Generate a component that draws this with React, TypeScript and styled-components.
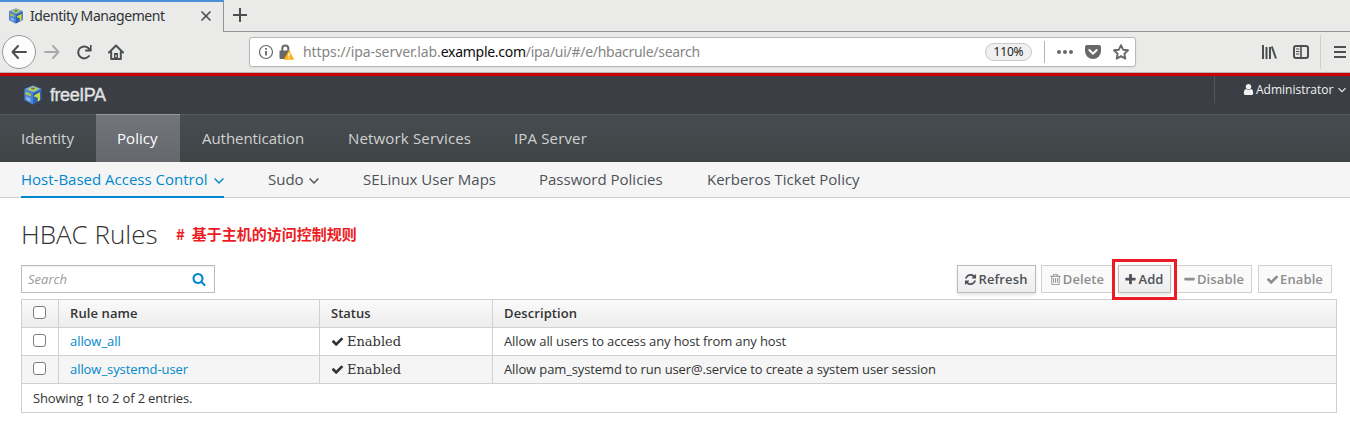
import React from "react";
import styled, { createGlobalStyle } from "styled-components";

const Global = createGlobalStyle`
  * { box-sizing: border-box; }
  body { margin: 0; background: #fff; color: #333; font: 13px/20px "Open Sans", sans-serif; }
  svg { display: block; flex: none; }
`;

const Page = styled.div`
  width: 1350px;
  height: 426px;
  overflow: hidden;
  background: #fff;
`;

const TabStrip = styled.div`
  display: flex;
  height: 32px;
  background: #eaeae9;
`;

const Tab = styled.div`
  display: flex;
  align-items: center;
  width: 224px;
  border-top: 2px solid #4a90d9;
  border-right: 1px solid #929595;
  padding: 0 11px 2px 8px;
  font: 14px/20px "Noto Sans", sans-serif;
  color: #2e3436;
`;

const TabTitle = styled.span`
  flex: 1;
  margin-left: 6px;
  white-space: nowrap;
  letter-spacing: -0.42px;
`;

const StripRest = styled.div`
  flex: 1;
  padding: 8px 0 0 9px;
  border-bottom: 1px solid #929595;
`;

const BrowserBar = styled.div`
  display: flex;
  align-items: center;
  height: 41px;
  padding: 0 3px 0 2px;
  background: #eaeae9;
  border-bottom: 1px solid #b2b5b5;
`;

const BackButton = styled.div`
  display: flex;
  align-items: center;
  justify-content: center;
  width: 34px;
  height: 34px;
  border: 1px solid #979998;
  border-radius: 50%;
  background: #fcfcfc;
`;

const BarIcon = styled.div<{ $left: number }>`
  margin-left: ${(p) => p.$left}px;
`;

const UrlBar = styled.div`
  display: flex;
  align-items: center;
  width: 887px;
  height: 30px;
  margin-left: 125px;
  padding: 0 6px 0 8px;
  border: 1px solid #b7b7b5;
  border-radius: 3px;
  background: #fff;
  box-shadow: 0 1px 2px rgba(0, 0, 0, 0.06);
`;

const Url = styled.span`
  flex: 1;
  margin-left: 8px;
  font: 14px/20px "Noto Sans", sans-serif;
  letter-spacing: -0.07px;
  color: #858585;
  white-space: nowrap;
`;

const UrlHost = styled.span`
  letter-spacing: -0.28px;
  color: #0c0c0d;
`;

const UrlPath = styled.span`
  letter-spacing: -0.28px;
`;

const Zoom = styled.span`
  width: 47px;
  height: 18px;
  border: 1px solid #c9c9c9;
  border-radius: 9px;
  background: #f0f0f0;
  font: 12px/16px "Noto Sans", sans-serif;
  letter-spacing: -0.2px;
  text-align: center;
  color: #222;
`;

const Divider = styled.div<{ $h: number; $left: number; $c: string }>`
  width: 1px;
  height: ${(p) => p.$h}px;
  margin-left: ${(p) => p.$left}px;
  background: ${(p) => p.$c};
`;

const Masthead = styled.header`
  display: flex;
  justify-content: space-between;
  height: 41px;
  padding-left: 23px;
  border-top: 3px solid #c00;
  background: #3b3e45;
`;

const Brand = styled.div`
  display: flex;
  align-items: center;
  gap: 7px;
  color: #e2e3e4;
  font: 18px/20px "Liberation Sans", sans-serif;
  letter-spacing: -0.45px;
  -webkit-text-stroke: 0.35px #e2e3e4;
`;

const UserMenu = styled.div`
  display: flex;
  align-items: center;
  width: 136px;
  height: 27px;
  padding-left: 27px;
  border-left: 1px solid #53565b;
  color: #f1f1f1;
  font-size: 12px;
`;

const UserName = styled.span`
  width: 80px;
  margin: 0 2px 0 1px;
`;

const MainNav = styled.nav`
  display: flex;
  height: 48px;
  border-top: 1px solid #55595c;
  background: linear-gradient(#474c50, #3f4447);
`;

const NavItem = styled.div<{ $w: number; $pad: number; $active?: boolean; $spacing?: number }>`
  width: ${(p) => p.$w}px;
  padding-left: ${(p) => p.$pad}px;
  margin-top: -1px;
  border-top: 1px solid ${(p) => (p.$active ? "#95979b" : "transparent")};
  background: ${(p) => (p.$active ? "linear-gradient(#72757b, #64676c)" : "none")};
  color: ${(p) => (p.$active ? "#fff" : "#d1d1d1")};
  font-size: 15px;
  line-height: 47px;
  letter-spacing: ${(p) => p.$spacing ?? 0}px;
  white-space: nowrap;
`;

const SubNav = styled.nav`
  display: flex;
  height: 36px;
  padding-left: 21px;
  border-bottom: 1px solid #cecdcd;
  background: #f5f5f5;
`;

const SubItem = styled.div<{ $w: number; $gap: number; $active?: boolean }>`
  display: flex;
  align-items: center;
  justify-content: space-between;
  width: ${(p) => p.$w}px;
  height: 36px;
  margin-right: ${(p) => p.$gap}px;
  border-bottom: 2px solid ${(p) => (p.$active ? "#0088ce" : "transparent")};
  color: ${(p) => (p.$active ? "#0088ce" : "#4d5258")};
  font-size: 15px;
  white-space: nowrap;
  svg { margin-top: 3px; }
`;

const Content = styled.main`
  padding: 19px 13px 0 21px;
`;

const TitleRow = styled.div`
  display: flex;
  align-items: center;
  height: 34px;
`;

const Title = styled.h1`
  width: 155px;
  margin: 0;
  font-size: 26px;
  font-weight: 300;
  line-height: 34px;
  white-space: nowrap;
`;

const Note = styled.span`
  color: #ed1c24;
  font: 700 15px/20px "Noto Sans CJK SC", sans-serif;
  white-space: pre;
`;

const Toolbar = styled.div`
  display: flex;
  align-items: center;
  justify-content: space-between;
  height: 28px;
  margin: 14px 5px 6px 0;
`;

const Search = styled.div`
  display: flex;
  align-items: center;
  justify-content: space-between;
  width: 194px;
  height: 28px;
  padding: 0 8px 0 6px;
  border: 1px solid #bbb;
  box-shadow: inset 0 1px 1px rgba(3, 3, 3, 0.075);
  color: #999;
  font-style: italic;
`;

const Actions = styled.div`
  display: flex;
`;

const Action = styled.div<{ $w: number; $disabled?: boolean; $right?: number }>`
  display: flex;
  align-items: center;
  justify-content: center;
  gap: 1px;
  padding-right: 1px;
  width: ${(p) => p.$w}px;
  height: 28px;
  margin-right: ${(p) => p.$right ?? 5}px;
  border: 1px solid ${(p) => (p.$disabled ? "#d1d1d1" : "#bbb")};
  background: ${(p) => (p.$disabled ? "#fafafa" : "linear-gradient(#fafafa, #ededed)")};
  box-shadow: ${(p) => (p.$disabled ? "none" : "0 2px 3px rgba(3, 3, 3, 0.1)")};
  color: ${(p) => (p.$disabled ? "#8b8d8f" : "#4d5258")};
  font-weight: 600;
  letter-spacing: 0.12px;
  white-space: nowrap;
`;

const Highlighted = styled.div`
  position: relative;
  &::after {
    content: "";
    position: absolute;
    z-index: 1;
    inset: -6px -1px -7px -6px;
    border: 3px solid #ed1c24;
  }
`;

const Table = styled.div`
  border: 1px solid #d1d1d1;
`;

const Row = styled.div<{ $bg: string; $head?: boolean }>`
  display: grid;
  grid-template-columns: 37px 261px 173px 1fr;
  height: 28px;
  border-bottom: 1px solid #d1d1d1;
  background: ${(p) => p.$bg};
  font-weight: ${(p) => (p.$head ? 600 : 400)};
`;

const Cell = styled.div<{ $link?: boolean; $serif?: boolean; $spacing?: number }>`
  display: flex;
  align-items: center;
  gap: 3px;
  padding: 0 0 ${(p) => (p.$serif ? 0 : 2)}px 11px;
  border-right: 1px solid #d1d1d1;
  color: ${(p) => (p.$link ? "#0088ce" : "#333")};
  font-family: ${(p) => (p.$serif ? '"DejaVu Serif", serif' : "inherit")};
  letter-spacing: ${(p) => p.$spacing ?? 0}px;
  white-space: nowrap;
  &:last-child { border-right: 0; }
`;

const Check = styled.span`
  width: 13px;
  height: 13px;
  border: 1px solid #7e7e7e;
  border-radius: 3px;
  background: #fff;
`;

const Footer = styled.div`
  height: 28px;
  padding-left: 11px;
  line-height: 29px;
  letter-spacing: -0.17px;
`;

const PATHS = {
  refresh:
    "M1639 1056q0 5-1 7-64 268-268 434.5t-478 166.5q-146 0-282.5-55t-243.5-157l-129 129q-19 19-45 19t-45-19-19-45v-448q0-26 19-45t45-19h448q26 0 45 19t19 45-19 45l-137 137q71 66 161 102t187 36q134 0 250-65t186-179q11-17 53-117 8-23 30-23h192q13 0 22.5 9.5t9.5 22.5zm25-800v448q0 26-19 45t-45 19h-448q-26 0-45-19t-19-45 19-45l138-138q-148-137-349-137-134 0-250 65t-186 179q-11 17-53 117-8 23-30 23h-199q-13 0-22.5-9.5t-9.5-22.5v-7q65-268 270-434.5t480-166.5q146 0 284 55.5t245 156.5l130-129q19-19 45-19t45 19 19 45z",
  plus: "M1600 736v192q0 40-28 68t-68 28h-416v416q0 40-28 68t-68 28h-192q-40 0-68-28t-28-68v-416h-416q-40 0-68-28t-28-68v-192q0-40 28-68t68-28h416v-416q0-40 28-68t68-28h192q40 0 68 28t28 68v416h416q40 0 68 28t28 68z",
  minus: "M1600 736v192q0 40-28 68t-68 28h-1216q-40 0-68-28t-28-68v-192q0-40 28-68t68-28h1216q40 0 68 28t28 68z",
  check:
    "M1671 566q0 40-28 68l-724 724-136 136q-28 28-68 28t-68-28l-136-136-362-362q-28-28-28-68t28-68l136-136q28-28 68-28t68 28l294 295 656-657q28-28 68-28t68 28l136 136q28 28 28 68z",
  trash:
    "M704 736v576q0 14-9 23t-23 9h-64q-14 0-23-9t-9-23v-576q0-14 9-23t23-9h64q14 0 23 9t9 23zm256 0v576q0 14-9 23t-23 9h-64q-14 0-23-9t-9-23v-576q0-14 9-23t23-9h64q14 0 23 9t9 23zm256 0v576q0 14-9 23t-23 9h-64q-14 0-23-9t-9-23v-576q0-14 9-23t23-9h64q14 0 23 9t9 23zm128 724v-948h-896v948q0 22 7 40.5t14.5 27 10.5 8.5h832q3 0 10.5-8.5t14.5-27 7-40.5zm-672-1076h448l-48-117q-7-9-17-11h-317q-10 2-17 11zm928 32v64q0 14-9 23t-23 9h-96v948q0 83-47 143.5t-113 60.5h-832q-66 0-113-58.5t-47-141.5v-952h-96q-14 0-23-9t-9-23v-64q0-14 9-23t23-9h309l70-167q15-37 54-63t79-26h320q40 0 79 26t54 63l70 167h309q14 0 23 9t9 23z",
  search:
    "M1216 832q0-185-131.5-316.5t-316.5-131.5-316.5 131.5-131.5 316.5 131.5 316.5 316.5 131.5 316.5-131.5 131.5-316.5zm512 832q0 52-38 90t-90 38q-54 0-90-38l-343-342q-179 124-399 124-143 0-273.5-55.5t-225-150-150-225-55.5-273.5 55.5-273.5 150-225 225-150 273.5-55.5 273.5 55.5 225 150 150 225 55.5 273.5q0 220-124 399l343 343q37 37 37 90z",
  user: "M1536 1399q0 109-62.5 187t-150.5 78h-854q-88 0-150.5-78t-62.5-187q0-85 8.5-160.5t31.5-152 58.5-131 94-89 134.5-34.5q131 128 313 128t313-128q76 0 134.5 34.5t94 89 58.5 131 31.5 152 8.5 160.5zm-256-887q0 159-112.5 271.5t-271.5 112.5-271.5-112.5-112.5-271.5 112.5-271.5 271.5-112.5 271.5 112.5 112.5 271.5z",
};

const Glyph = ({ name, size = 13, color = "currentColor" }: { name: keyof typeof PATHS; size?: number; color?: string }) => (
  <svg width={size} height={size} viewBox="0 0 1792 1792" fill={color}>
    <path d={PATHS[name]} />
  </svg>
);

const Chevron = ({ size = 10 }: { size?: number }) => (
  <svg width={size} height={size} viewBox="0 0 10 10" fill="none" stroke="currentColor" strokeWidth="1.4">
    <path d="M.6 2.6 5 7l4.4-4.4" />
  </svg>
);

const Cube = ({ w, h }: { w: number; h: number }) => (
  <svg width={w} height={h} viewBox="0 0 20 20" preserveAspectRatio="none">
    <path d="M10 .5 18.5 4v11L10 19.5 1.5 15V4z" fill="#2f60b8" />
    <path d="M10 .5 18.5 4 10 7.8 1.5 4z" fill="#7ba5d8" />
    <path d="M1.5 4 10 7.8v11.7L1.5 15z" fill="#4a83d6" />
    <path d="m10 1.4 5.2 2.3L10.6 6.4 4.6 4.3z" fill="#c3d545" />
    <ellipse cx="10" cy="3.6" rx="2" ry="1.1" fill="#587f63" />
    <path d="m2.3 6.5 5.5 2.3v2.6L2.3 9.2z" fill="#a9c74a" />
    <path d="m3.2 11.5 4.4 2v3.3l-4.4-2.1z" fill="#8bb6ee" />
    <path d="m11.3 10.3 5.7-3v8l-2.3 1.2v-4.2l-1.4.8v-1.6l-2 .8z" fill="#c8dc3c" />
  </svg>
);

const stroke = { fill: "none", stroke: "#4a4f51", strokeWidth: 2, strokeLinecap: "round", strokeLinejoin: "round" } as const;

const rules = [
  { name: "allow_all", text: "Allow all users to access any host from any host", bg: "#fff" },
  { name: "allow_systemd-user", text: "Allow pam_systemd to run user@.service to create a system user session", bg: "#f5f5f5" },
];

export default function App() {
  return (
    <Page>
      <Global />
      <TabStrip>
        <Tab>
          <Cube w={16} h={16} />
          <TabTitle>Identity Management</TabTitle>
          <svg width="12" height="12" viewBox="0 0 12 12" {...stroke} strokeWidth="1.7">
            <path d="m2 2 8 8M10 2l-8 8" />
          </svg>
        </Tab>
        <StripRest>
          <svg width="14" height="14" viewBox="0 0 14 14" {...stroke} strokeLinecap="butt">
            <path d="M7 0v14M0 7h14" />
          </svg>
        </StripRest>
      </TabStrip>
      <BrowserBar>
        <BackButton>
          <svg width="16" height="16" viewBox="0 0 16 16" {...stroke}>
            <path d="M15 8H1.5M7 2 1.5 8 7 14" />
          </svg>
        </BackButton>
        <BarIcon $left={8}>
          <svg width="16" height="16" viewBox="0 0 16 16" {...stroke} stroke="#aaa">
            <path d="M1 8h13.5M9 2l5.5 6L9 14" />
          </svg>
        </BarIcon>
        <BarIcon $left={16}>
          <svg width="16" height="16" viewBox="0 0 16 16" {...stroke}>
            <path d="M13 12A6 6 0 1 1 12.3 4" />
            <path d="M15.6 1v6.4H9.2V5.6h2.6L14 3.2V1z" fill="#4a4f51" stroke="none" />
          </svg>
        </BarIcon>
        <BarIcon $left={16}>
          <svg width="16" height="16" viewBox="0 0 16 16" {...stroke}>
            <path d="M1 8.5 8 1.5l7 7M3.2 8v7h9.6V8" />
            <path d="M6 15V9h4v6z" fill="#4a4f51" stroke="none" />
            <path d="M8 11v2" stroke="#eaeae9" strokeWidth="1.2" strokeLinecap="butt" />
          </svg>
        </BarIcon>
        <UrlBar>
          <svg width="16" height="16" viewBox="0 0 16 16" fill="none" stroke="#686868" strokeWidth="1.2">
            <circle cx="8" cy="8" r="6.5" />
            <path d="M8 7v4.6M8 4v1.8" strokeWidth="1.8" />
          </svg>
          <BarIcon $left={5}>
            <svg width="16" height="16" viewBox="0 0 16 16">
              <path d="M3.3 7V4.6a3 3 0 0 1 6 0V7" fill="none" stroke="#686868" strokeWidth="2" />
              <rect x=".5" y="6.5" width="10" height="8.5" rx="1" fill="#686868" />
              <path d="M10 6.5 14.8 15.6H5.2z" fill="#ffb012" stroke="#ffb012" strokeWidth=".6" strokeLinejoin="round" />
              <path d="M10 9v3.4M10 13.3v1.3" stroke="#fff" strokeWidth="1.3" />
            </svg>
          </BarIcon>
          <Url>
            https://ipa-server.lab.<UrlHost>example.com</UrlHost>
            <UrlPath>/ipa/ui/#/e/hbacrule/search</UrlPath>
          </Url>
          <Zoom>110%</Zoom>
          <Divider $h={22} $left={12} $c="#b5b5b5" />
          <BarIcon $left={12}>
            <svg width="16" height="16" viewBox="0 0 16 16" fill="#686868">
              <circle cx="2" cy="8" r="2" />
              <circle cx="8" cy="8" r="2" />
              <circle cx="14" cy="8" r="2" />
            </svg>
          </BarIcon>
          <BarIcon $left={12}>
            <svg width="16" height="16" viewBox="0 0 16 16">
              <path d="M2 1h12a2 2 0 0 1 2 2v4a8 8 0 0 1-16 0V3a2 2 0 0 1 2-2z" fill="#686868" />
              <path d="m4.3 6 3.7 3.6L11.7 6" fill="none" stroke="#fff" strokeWidth="2" strokeLinecap="round" />
            </svg>
          </BarIcon>
          <BarIcon $left={12}>
            <svg width="16" height="16" viewBox="0 0 16 16" fill="none" stroke="#686868" strokeWidth="1.9" strokeLinejoin="round">
              <path d="m8 1.2 2.1 4.5 4.9.6-3.6 3.4.9 4.9L8 12.2l-4.3 2.4.9-4.9L1 6.3l4.9-.6z" />
            </svg>
          </BarIcon>
        </UrlBar>
        <BarIcon $left={125}>
          <svg width="16" height="16" viewBox="0 0 16 16" {...stroke} strokeLinecap="butt">
            <path d="M2 1v14M5.5 3v12M9 3v12M10.8 2.5 15 14.5" />
          </svg>
        </BarIcon>
        <BarIcon $left={16}>
          <svg width="16" height="16" viewBox="0 0 16 16" {...stroke}>
            <rect x="1" y="2" width="14" height="12" rx="2" />
            <path d="M8 2v12" strokeWidth="1.6" />
            <path d="M3.4 5H6M3.4 7.5H6M3.4 10H6" strokeWidth="1" />
          </svg>
        </BarIcon>
        <Divider $h={34} $left={11} $c="#cfcfce" />
        <BarIcon $left={13}>
          <svg width="12" height="16" viewBox="0 0 12 16" {...stroke} strokeLinecap="butt">
            <path d="M0 3h12M0 8h12M0 13h12" />
          </svg>
        </BarIcon>
      </BrowserBar>
      <Masthead>
        <Brand>
          <Cube w={20} h={20} />
          freeIPA
        </Brand>
        <UserMenu>
          <Glyph name="user" />
          <UserName>Administrator</UserName>
          <Chevron size={8} />
        </UserMenu>
      </Masthead>
      <MainNav>
        <NavItem $w={96} $pad={21}>Identity</NavItem>
        <NavItem $w={84} $pad={21} $active $spacing={0.05}>Policy</NavItem>
        <NavItem $w={146} $pad={22} $spacing={-0.05}>Authentication</NavItem>
        <NavItem $w={166} $pad={22} $spacing={0.17}>Network Services</NavItem>
        <NavItem $w={120} $pad={22} $spacing={0.15}>IPA Server</NavItem>
      </MainNav>
      <SubNav>
        <SubItem $w={203} $gap={44} $active>
          Host-Based Access Control <Chevron />
        </SubItem>
        <SubItem $w={51} $gap={44}>
          Sudo <Chevron />
        </SubItem>
        <SubItem $w={134} $gap={42}>SELinux User Maps</SubItem>
        <SubItem $w={125} $gap={43}>Password Policies</SubItem>
        <SubItem $w={155} $gap={0}>Kerberos Ticket Policy</SubItem>
      </SubNav>
      <Content>
        <TitleRow>
          <Title>HBAC Rules</Title>
          <Note>{"#  基于主机的访问控制规则"}</Note>
        </TitleRow>
        <Toolbar>
          <Search>
            Search <Glyph name="search" size={14} color="#0088ce" />
          </Search>
          <Actions>
            <Action $w={79}><Glyph name="refresh" />Refresh</Action>
            <Action $w={72} $disabled><Glyph name="trash" />Delete</Action>
            <Highlighted>
              <Action $w={53}><Glyph name="plus" />Add</Action>
            </Highlighted>
            <Action $w={76} $disabled $right={6}><Glyph name="minus" />Disable</Action>
            <Action $w={74} $disabled $right={0}><Glyph name="check" />Enable</Action>
          </Actions>
        </Toolbar>
        <Table>
          <Row $head $bg="linear-gradient(#fafafa, #ededed)">
            <Cell><Check /></Cell>
            <Cell $spacing={0.1}>Rule name</Cell>
            <Cell>Status</Cell>
            <Cell $spacing={0.1}>Description</Cell>
          </Row>
          {rules.map((r) => (
            <Row key={r.name} $bg={r.bg}>
              <Cell><Check /></Cell>
              <Cell $link $spacing={-0.06}>{r.name}</Cell>
              <Cell $serif><Glyph name="check" />Enabled</Cell>
              <Cell $spacing={-0.12}>{r.text}</Cell>
            </Row>
          ))}
          <Footer>Showing 1 to 2 of 2 entries.</Footer>
        </Table>
      </Content>
    </Page>
  );
}
